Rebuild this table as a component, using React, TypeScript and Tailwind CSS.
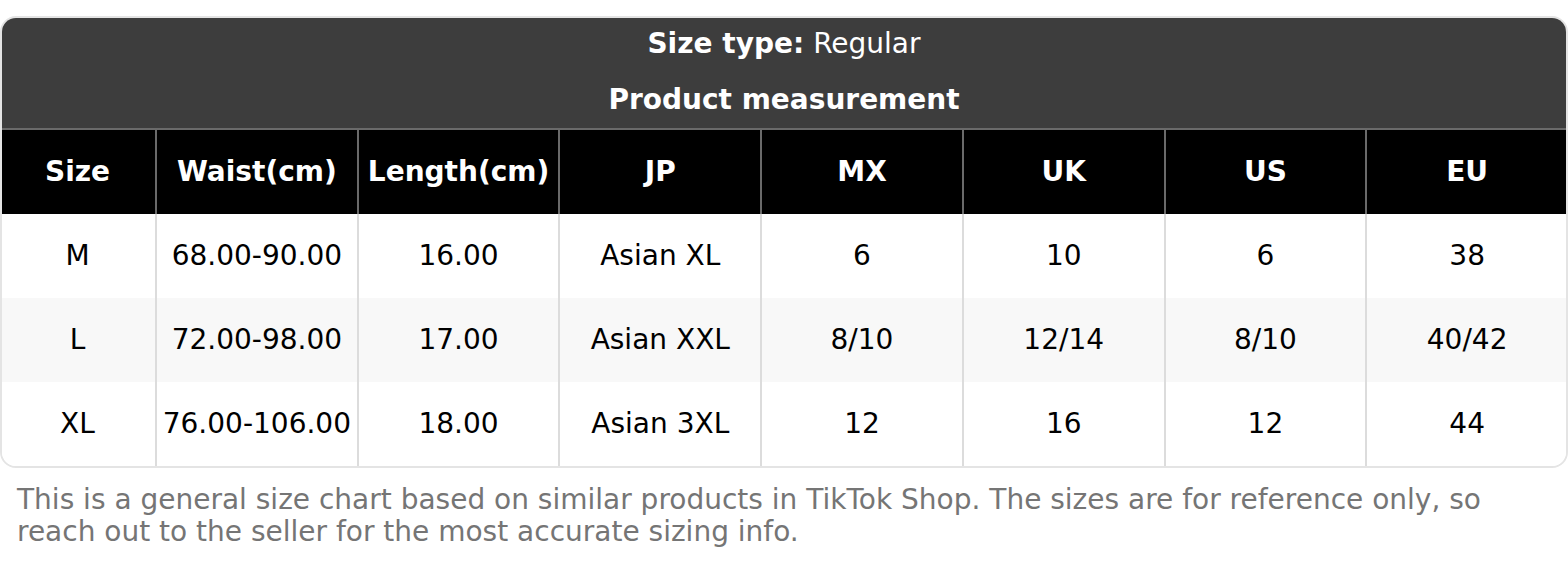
import React from "react";

const headers = ["Size", "Waist(cm)", "Length(cm)", "JP", "MX", "UK", "US", "EU"];
const rows = [
  ["M", "68.00-90.00", "16.00", "Asian XL", "6", "10", "6", "38"],
  ["L", "72.00-98.00", "17.00", "Asian XXL", "8/10", "12/14", "8/10", "40/42"],
  ["XL", "76.00-106.00", "18.00", "Asian 3XL", "12", "16", "12", "44"],
];

export default function App() {
  return (
    <div className="w-[1568px] h-[564px] bg-white pt-4" style={{ fontFamily: '"DejaVu Sans", sans-serif' }}>
      <div className="rounded-[16px] border-2 border-[#e4e4e4] overflow-hidden">
        <div className="bg-[#3d3d3d] text-white text-[28px] -mx-[2px] -mt-[2px]">
          <div className="h-[56px] flex items-center justify-center">
            <span className="font-bold">Size type:</span>
            <span className="ml-[9px]">Regular</span>
          </div>
          <div className="h-[56px] flex items-center justify-center font-bold">Product measurement</div>
        </div>
        <div className="grid grid-cols-[155px_repeat(7,1fr)] -ml-[2px] mr-[-1px]">
          {headers.map((h, i) => (
            <div
              key={h}
              className={`h-[86px] bg-black text-white font-bold text-[28px] flex items-center justify-center border-t-2 border-t-[#6a6a6a] ${i > 0 ? "border-l-2 border-l-[#6a6a6a]" : ""}`}
            >
              {h}
            </div>
          ))}
          {rows.map((r, ri) =>
            r.map((c, ci) => (
              <div
                key={ri + "-" + ci}
                className={`h-[84px] text-black text-[28px] flex items-center justify-center ${ri === 1 ? "bg-[#f8f8f8]" : "bg-white"} ${ci > 0 ? "border-l-2 border-l-[#dcdcdc]" : ""}`}
              >
                {c}
              </div>
            ))
          )}
        </div>
      </div>
      <p className="px-[17px] pt-[16px] text-[28px] leading-[32px] text-[#757575]">
        This is a general size chart based on similar products in TikTok Shop. The sizes are for reference only, so reach out to the seller for the most accurate sizing info.
      </p>
    </div>
  );
}
